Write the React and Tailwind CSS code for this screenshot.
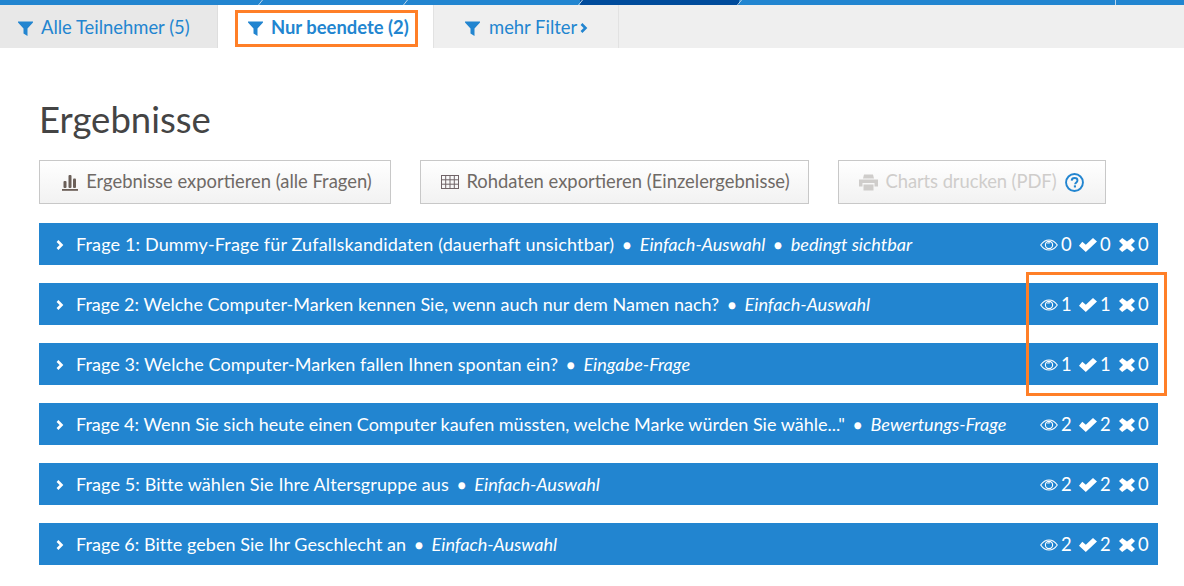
import React from "react";

const lato = { fontFamily: "Lato, sans-serif" };

const questions = [
  { text: "Frage 1: Dummy-Frage für Zufallskandidaten (dauerhaft unsichtbar)", track: "tracking-[0.15px]", tags: ["Einfach-Auswahl", "bedingt sichtbar"], counts: [0, 0, 0] },
  { text: "Frage 2: Welche Computer-Marken kennen Sie, wenn auch nur dem Namen nach?", track: "tracking-normal", tags: ["Einfach-Auswahl"], counts: [1, 1, 0] },
  { text: "Frage 3: Welche Computer-Marken fallen Ihnen spontan ein?", track: "tracking-[0.06px]", tags: ["Eingabe-Frage"], counts: [1, 1, 0] },
  { text: 'Frage 4: Wenn Sie sich heute einen Computer kaufen müssten, welche Marke würden Sie wähle..."', track: "tracking-normal", tags: ["Bewertungs-Frage"], counts: [2, 2, 0] },
  { text: "Frage 5: Bitte wählen Sie Ihre Altersgruppe aus", track: "tracking-[0.11px]", tags: ["Einfach-Auswahl"], counts: [2, 2, 0] },
  { text: "Frage 6: Bitte geben Sie Ihr Geschlecht an", track: "tracking-[0.04px]", tags: ["Einfach-Auswahl"], counts: [2, 2, 0] },
];

const FilterIcon = () => (
  <svg width="15" height="15" viewBox="0 0 15 15" className="shrink-0">
    <path d="M0 0.500H15V1.500L9.500 7.500V15L5.500 12.500V7.500L0 1.500Z" fill="#2285d0" />
  </svg>
);

const EyeIcon = () => (
  <svg width="18" height="12" viewBox="0 0 18 12" fill="none" stroke="white" strokeWidth="1.100" className="shrink-0">
    <path d="M0.7 6C3 2.6 6 1 9 1s6 1.600 8.300 5C15 9.400 12 11 9 11S3 9.400 0.700 6Z" />
    <circle cx="9" cy="6" r="3.600" />
    <path d="M7.500 4.500a2 2 0 0 1 2.500-0.500" />
  </svg>
);

const CheckIcon = () => (
  <svg width="18" height="14" viewBox="0 0 18 14" className="shrink-0">
    <path d="M0 7.800L3.300 3.800L6.800 6.800L14 0L18 3.600L6.800 14Z" fill="white" />
  </svg>
);

const CrossIcon = () => (
  <svg width="16" height="14" viewBox="0 0 16 14" className="shrink-0">
    <path d="M0 3L3.200 0L8 3.600L12.800 0L16 3L12 7L16 11L12.800 14L8 10.400L3.200 14L0 11L4 7Z" fill="white" />
  </svg>
);

const StatsIcon = () => (
  <svg width="16" height="17" viewBox="0 0 16 17" fill="#6b5f58" className="shrink-0">
    <rect x="1.500" y="7" width="3" height="7" rx="1" />
    <rect x="6.500" y="1" width="3" height="13" rx="1" />
    <rect x="11" y="4.500" width="3" height="9.500" rx="1" />
    <rect x="0" y="15" width="16" height="1.800" />
  </svg>
);

const TableIcon = () => (
  <svg width="18" height="14" viewBox="0 0 18 14" fill="none" stroke="#706468" strokeWidth="1" className="shrink-0">
    <rect x="0.500" y="0.500" width="17" height="13" />
    <path d="M0.500 4.800H17.500M0.500 9.200H17.500M4.700 0.500V13.500M9 0.500V13.500M13.300 0.500V13.500" />
  </svg>
);

const PrintIcon = () => (
  <svg width="19" height="17" viewBox="0 0 19 17" fill="#cfcdcb" className="shrink-0">
    <path d="M5 0.500H14L15 4.500H4Z" />
    <path d="M0 5.500H19V12.500H15.500V9H3.500V12.500H0Z" />
    <path d="M4.500 10.500H14.500V16.500H4.500Z" />
  </svg>
);

const HelpIcon = () => (
  <svg width="19" height="19" viewBox="0 0 18 18" className="shrink-0">
    <circle cx="9" cy="9" r="8" fill="none" stroke="#2285d0" strokeWidth="1.800" />
    <path d="M6.300 7.200C6.400 5.600 7.500 4.800 9.100 4.800c1.600 0 2.700 0.900 2.700 2.200 0 1.900-2.200 1.900-2.200 3.700" fill="none" stroke="#2285d0" strokeWidth="1.800" />
    <rect x="8.400" y="11.700" width="2" height="2" fill="#2285d0" />
  </svg>
);

const Chevron = ({ color = "white" }) => (
  <svg width="8" height="10" viewBox="0 0 8 10" fill="none" stroke={color} strokeWidth="2.600" className="shrink-0">
    <path d="M1.500 1L5.500 5L1.500 9" />
  </svg>
);

const Slash = ({ className }) => (
  <div className={`absolute top-0 h-[5px] w-[5px] ${className}`}>
    <svg width="5" height="5" viewBox="0 0 5 5"><path d="M0.500 5L4.500 0" stroke="#bcd6ec" strokeWidth="1" /></svg>
  </div>
);

const QuestionBar = ({ q }) => (
  <div className="flex h-[42px] items-center justify-between bg-[#2285d0] pl-[17px] pr-[9px] pt-[2px] text-white">
    <div className="flex items-center text-[18px]">
      <Chevron />
      <span className={`ml-[12px] ${q.track}`}>{q.text}</span>
      {q.tags.map((tag) => (
        <React.Fragment key={tag}>
          <span className="mx-[8.500px] text-[14px]">●</span>
          <span className="text-[18.100px] italic">{tag}</span>
        </React.Fragment>
      ))}
    </div>
    <div className="flex items-center text-[18.400px]">
      <EyeIcon />
      <span className="ml-[3px] w-[11px]">{q.counts[0]}</span>
      <span className="ml-[7px]"><CheckIcon /></span>
      <span className="ml-[3px] w-[11px]">{q.counts[1]}</span>
      <span className="ml-[8px]"><CrossIcon /></span>
      <span className="ml-[3px] w-[11px]">{q.counts[2]}</span>
    </div>
  </div>
);

const ExportButton = ({ className, children }) => (
  <button className={`flex h-[44px] items-center justify-center border border-[#c8c8c8] bg-gradient-to-b from-white to-[#f2f2f2] text-[18.400px] ${className}`}>
    {children}
  </button>
);

const App = () => {
  return (
    <div className="relative h-[586px] w-[1184px] overflow-hidden bg-white" style={lato}>
      <div className="relative flex h-[5px] bg-[#2285d0]">
        <div className="absolute left-[580px] top-0 h-full w-[159px] bg-[#004b9b]" />
        <Slash className="left-[258px]" />
        <Slash className="left-[403px]" />
        <Slash className="left-[578px]" />
        <Slash className="left-[737px]" />
        <div className="absolute left-[1115px] top-0 h-full w-px bg-[#bcd6ec]" />
      </div>

      <div className="flex h-[43px] bg-[#efefef] text-[18.400px] text-[#2285d0]">
        <div className="flex w-[218px] items-center gap-[8px] border-r border-[#dedede] bg-[#e8e8e8] pl-[18px] pt-[3px]">
          <FilterIcon />
          <span>Alle Teilnehmer (5)</span>
        </div>
        <div className="flex w-[215px] items-center gap-[8px] bg-white pl-[30px] pt-[3px] font-bold">
          <FilterIcon />
          <span>Nur beendete (2)</span>
        </div>
        <div className="flex w-[186px] items-center gap-[9px] border-x border-[#e2e2e2] pl-[31px] pt-[3px]">
          <FilterIcon />
          <span className="flex items-center gap-[3px]">mehr Filter <Chevron color="#2285d0" /></span>
        </div>
      </div>

      <div className="pl-[39px] pr-[26px]">
        <h1 className="mt-[47px] text-[36.500px] leading-[48px] text-[#444444]">Ergebnisse</h1>

        <div className="mt-[17px] flex gap-[29px]">
          <ExportButton className="w-[352px] gap-[8px] pl-[4px] text-[#6f6a66]">
            <StatsIcon />
            Ergebnisse exportieren (alle Fragen)
          </ExportButton>
          <ExportButton className="w-[389px] gap-[7px] pl-[2px] text-[#6f6a66]">
            <TableIcon />
            Rohdaten exportieren (Einzelergebnisse)
          </ExportButton>
          <ExportButton className="w-[268px] gap-[7px] pr-[1px] tracking-[-0.07px] text-[#cfcdcb]">
            <PrintIcon />
            Charts drucken (PDF)
            <span className="ml-[1px]"><HelpIcon /></span>
          </ExportButton>
        </div>

        <div className="mt-[19px] flex flex-col gap-[18px]">
          {questions.map((q) => (
            <QuestionBar key={q.text} q={q} />
          ))}
        </div>
      </div>

      {/* annotation frames lying over the screenshot */}
      <div className="absolute left-[235px] top-[10px] h-[37px] w-[183px] border-[3px] border-[#ff7f27]" />
      <div className="absolute left-[1026px] top-[272px] h-[124px] w-[141px] border-[3px] border-[#ff7f27]" />
    </div>
  );
};

export default App;
